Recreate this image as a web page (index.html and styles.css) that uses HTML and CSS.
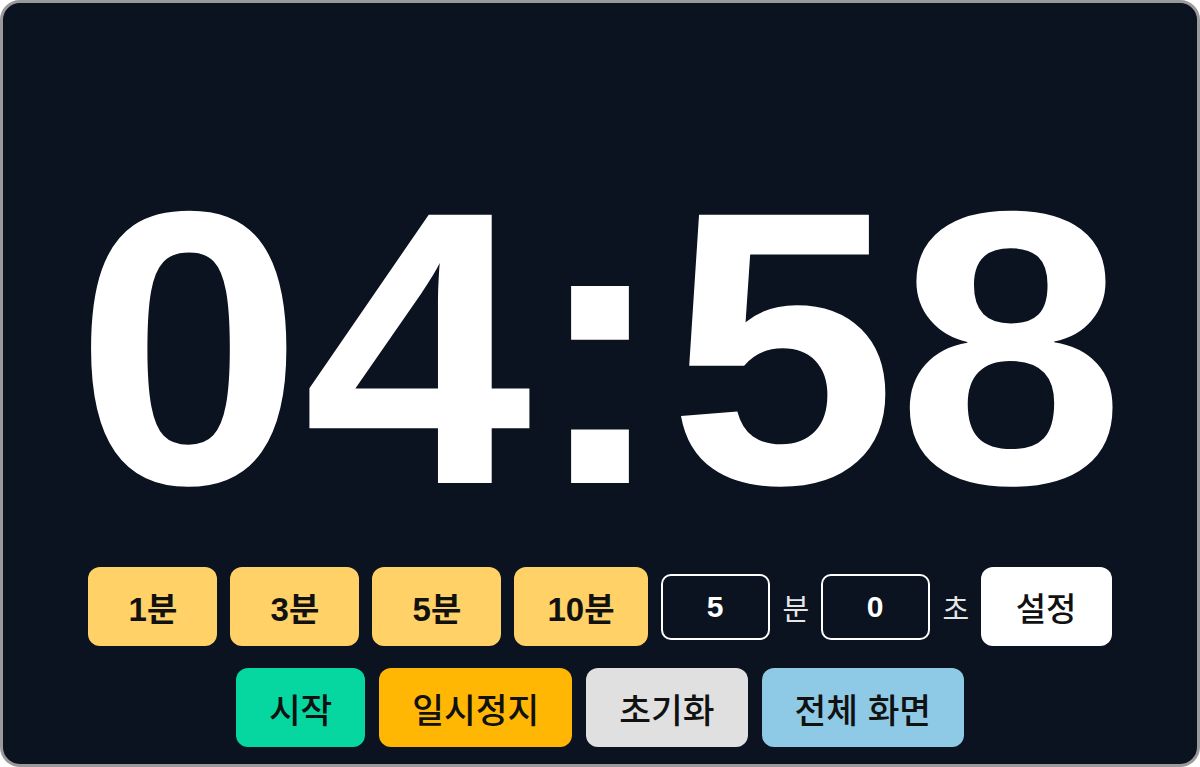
FILE: index.html
```html
<!DOCTYPE html>
<html lang="ko">
<head>
<meta charset="utf-8">
<title>타이머</title>
<link rel="stylesheet" href="styles.css">
</head>
<body>
<main class="timer">
  <div class="time">04:58</div>
  <div class="row presets">
    <button class="btn preset">1분</button>
    <button class="btn preset">3분</button>
    <button class="btn preset">5분</button>
    <button class="btn preset">10분</button>
    <input class="field" type="text" value="5" inputmode="numeric">
    <span class="unit">분</span>
    <input class="field" type="text" value="0" inputmode="numeric">
    <span class="unit">초</span>
    <button class="btn set">설정</button>
  </div>
  <div class="row controls">
    <button class="btn ctrl start">시작</button>
    <button class="btn ctrl pause">일시정지</button>
    <button class="btn ctrl reset">초기화</button>
    <button class="btn ctrl full">전체 화면</button>
  </div>
</main>
</body>
</html>
```
FILE: styles.css
```css
* { box-sizing: border-box; }
html, body { margin: 0; padding: 0; background: #ffffff; }
body {
  font-family: "Liberation Sans", "Noto Sans CJK KR", sans-serif;
}
.timer {
  width: 1200px;
  height: 767px;
  background: #0b1220;
  border: 3px solid #9a9a9a;
  border-radius: 20px;
  padding-top: 150px;
  overflow: hidden;
}
.time {
  font-family: "Liberation Sans", Arial, sans-serif;
  font-weight: 700;
  font-size: 390px;
  line-height: 1;
  color: #ffffff;
  text-align: center;
  transform: scaleX(1.053);
  transform-origin: 50% 50%;
  height: 391px;
}
.row {
  display: flex;
  justify-content: center;
  align-items: center;
}
.presets {
  margin-top: 23px;
  gap: 13px;
}
.controls {
  margin-top: 22px;
  gap: 14px;
}
.btn {
  font-family: "Liberation Sans", "Noto Sans CJK KR", sans-serif;
  border: none;
  border-radius: 12px;
  height: 79px;
  color: #111111;
  cursor: pointer;
  white-space: nowrap;
}
.preset {
  background: #ffd166;
  font-size: 33px;
  font-weight: 700;
  padding: 0 33px;
  min-width: 129px;
}
.set {
  background: #ffffff;
  font-size: 33px;
  font-weight: 500;
  padding: 0 34px;
  min-width: 131px;
}
.ctrl {
  font-size: 34.5px;
  font-weight: 500;
  padding: 0 33px;
}
.start { background: #06d6a0; }
.pause { background: #ffb703; }
.reset { background: #e0e0e0; }
.full { background: #8ecae6; }
.field {
  width: 109px;
  height: 66px;
  border: 2px solid #ffffff;
  border-radius: 10px;
  background: transparent;
  color: #ffffff;
  font-family: "Liberation Sans", sans-serif;
  font-weight: 700;
  font-size: 30px;
  text-align: center;
  outline: none;
  padding: 0;
}
.unit {
  color: #e6e6e6;
  font-size: 29px;
  width: 25px;
  text-align: center;
}
```
